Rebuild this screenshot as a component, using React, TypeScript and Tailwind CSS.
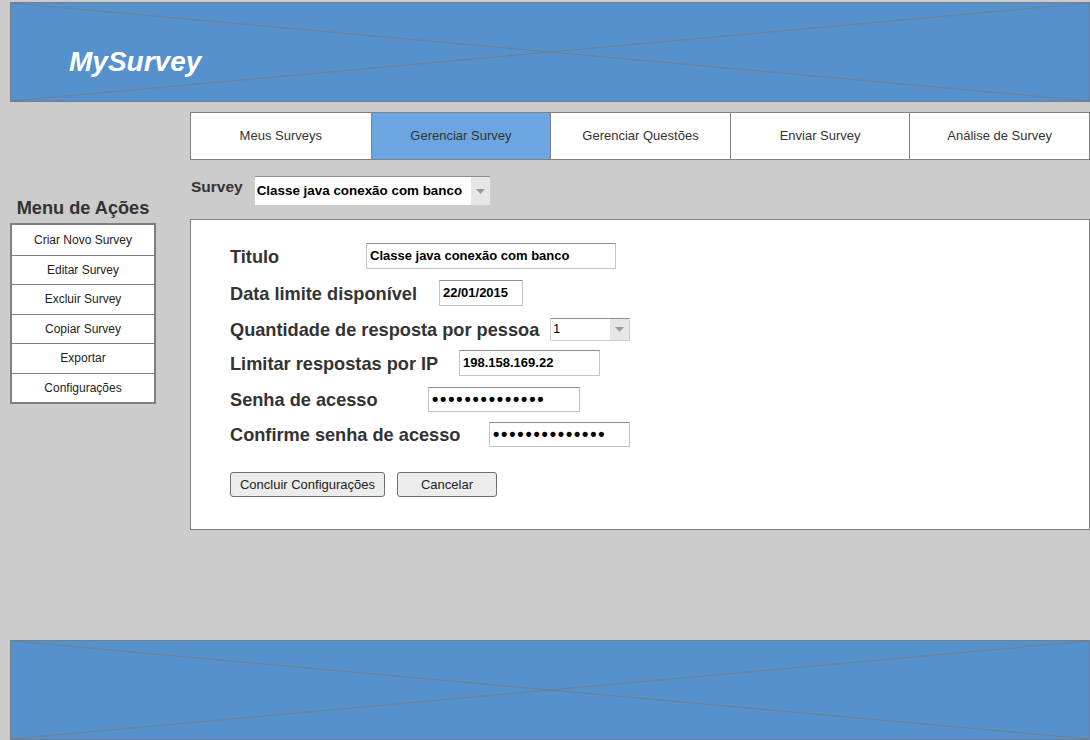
import React from "react";

const font = { fontFamily: '"Liberation Sans", Arial, sans-serif' };

function Placeholder({ children }: { children?: React.ReactNode }) {
  return (
    <div className="relative ml-[10px] h-[100px] w-[1080px] border border-[#6f7f8f] bg-[#5591cd]">
      <svg className="absolute inset-0 h-full w-full" viewBox="0 0 100 100" preserveAspectRatio="none">
        <line x1="0" y1="0" x2="100" y2="100" stroke="#6f7f8f" strokeWidth="1" vectorEffect="non-scaling-stroke" />
        <line x1="0" y1="100" x2="100" y2="0" stroke="#6f7f8f" strokeWidth="1" vectorEffect="non-scaling-stroke" />
      </svg>
      {children}
    </div>
  );
}

function Caret() {
  return (
    <div className="flex h-full w-[19px] items-center justify-center bg-[#e6e6e6]">
      <svg width="9" height="5" viewBox="0 0 9 5">
        <path d="M0 0 L9 0 L4.5 5 Z" fill="#9a9a9a" />
      </svg>
    </div>
  );
}

const inputCls =
  "flex items-center border border-[#c4c4c4] border-t-[#8f8f8f] bg-white px-[3px] text-[13px] font-bold text-black";
const labelCls = "pt-[3px] text-[18.2px] font-bold text-[#333]";

export default function App() {
  const tabs = ["Meus Surveys", "Gerenciar Survey", "Gerenciar Questões", "Enviar Survey", "Análise de Survey"];
  const menu = ["Criar Novo Survey", "Editar Survey", "Excluir Survey", "Copiar Survey", "Exportar", "Configurações"];
  const dots = "••••••••••••••";

  return (
    <div style={font} className="flex h-[740px] w-[1090px] flex-col overflow-hidden bg-[#cccccc] pt-[2px] text-[#333]">
      <Placeholder>
        <div className="relative pl-[58px] pt-[43px] text-[28px] font-bold italic leading-[32px] text-white">MySurvey</div>
      </Placeholder>

      <div className="flex h-[538px]">
        {/* left sidebar */}
        <div className="ml-[10px] flex w-[146px] flex-col items-center pt-[96px]">
          <div className="text-[18.2px] font-bold leading-[20px] text-[#333]">Menu de Ações</div>
          <div className="mt-[5px] w-[146px] border-2 border-[#7f7f7f] bg-white">
            {menu.map((m, i) => (
              <div
                key={m}
                className={`flex h-[29.5px] items-center justify-center text-[12px] text-[#222] ${i > 0 ? "border-t border-[#7f7f7f]" : ""}`}
              >
                {m}
              </div>
            ))}
          </div>
        </div>

        {/* main column */}
        <div className="ml-[34px] flex w-[900px] flex-col pt-[10px]">
          <div className="grid h-[48px] grid-cols-5 border border-[#808080] bg-white">
            {tabs.map((t, i) => (
              <div
                key={t}
                className={`flex items-center justify-center text-[13px] text-[#333] ${i > 0 ? "border-l border-[#808080]" : ""} ${i === 1 ? "bg-[#6ca6e0]" : ""}`}
              >
                {t}
              </div>
            ))}
          </div>

          <div className="mt-[16px] flex h-[29px] items-start">
            <div className="ml-[1px] pt-[2px] text-[15.5px] font-bold leading-[18px] text-[#333]">Survey</div>
            <div className="ml-[12px] flex h-[29px] w-[235px] items-center border-t border-[#8f8f8f] bg-white">
              <div className="flex-1 pl-[2px] text-[13.4px] font-bold text-black">Classe java conexão com banco</div>
              <Caret />
            </div>
          </div>

          <div className="mt-[14px] h-[311px] border border-[#808080] bg-white pl-[39px] pt-[23px]">
            <div className="flex h-[26px] items-center">
              <div className={`w-[136px] ${labelCls}`}>Titulo</div>
              <div className={`${inputCls} h-[26px] w-[250px] text-[13.4px]`}>Classe java conexão com banco</div>
            </div>
            <div className="mt-[11px] flex h-[26px] items-center">
              <div className={`w-[209px] ${labelCls}`}>Data limite disponível</div>
              <div className={`${inputCls} h-[26px] w-[84px]`}>22/01/2015</div>
            </div>
            <div className="mt-[10px] flex h-[26px] items-center">
              <div className={`w-[320px] ${labelCls}`}>Quantidade de resposta por pessoa</div>
              <div className="flex h-[23px] w-[80px] items-center border border-[#d0d0d0] border-t-[#8f8f8f] bg-white">
                <div className="flex-1 pl-[2px] text-[13px] text-black">1</div>
                <Caret />
              </div>
            </div>
            <div className="mt-[8px] flex h-[26px] items-center">
              <div className={`w-[229px] ${labelCls}`}>Limitar respostas por IP</div>
              <div className={`${inputCls} h-[26px] w-[141px]`}>198.158.169.22</div>
            </div>
            <div className="mt-[10px] flex h-[26px] items-center">
              <div className={`w-[198px] ${labelCls}`}>Senha de acesso</div>
              <div className={`${inputCls} h-[25px] w-[152px]`}>
                <span className="text-[18px] font-bold tracking-[1.8px]">{dots}</span>
              </div>
            </div>
            <div className="mt-[9px] flex h-[26px] items-center">
              <div className={`w-[259px] ${labelCls}`}>Confirme senha de acesso</div>
              <div className={`${inputCls} h-[25px] w-[141px]`}>
                <span className="text-[18px] font-bold tracking-[1.8px]">{dots}</span>
              </div>
            </div>
            <div className="mt-[25px] flex gap-[12px]">
              <button className="flex h-[25px] w-[155px] items-center justify-center rounded-[3px] border border-[#6f6f6f] bg-[#ececec] text-[13px] text-[#222]">
                Concluir Configurações
              </button>
              <button className="flex h-[25px] w-[100px] items-center justify-center rounded-[3px] border border-[#6f6f6f] bg-[#ececec] text-[13px] text-[#222]">
                Cancelar
              </button>
            </div>
          </div>
        </div>
      </div>

      <Placeholder />
    </div>
  );
}
